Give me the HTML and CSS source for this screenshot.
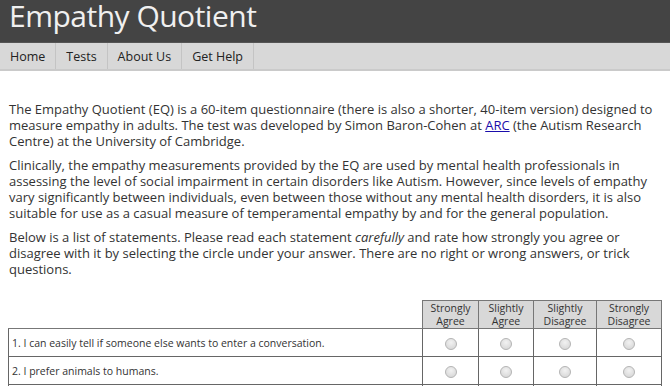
FILE: index.html
```html
<!DOCTYPE html>
<html>
<head>
<meta charset="utf-8">
<link rel="stylesheet" href="styles.css">
</head>
<body>
<header class="masthead"><h1 class="site-title">Empathy Quotient</h1></header>
<nav class="nav">
  <a class="nav-item" href="#">Home</a>
  <a class="nav-item" href="#">Tests</a>
  <a class="nav-item" href="#">About Us</a>
  <a class="nav-item" href="#">Get Help</a>
</nav>
<main class="content">
  <p>The Empathy Quotient (EQ) is a 60-item questionnaire (there is also a shorter, 40-item version) designed to measure empathy in adults. The test was developed by Simon Baron-Cohen at <a href="#" class="link">ARC</a> (the Autism Research Centre) at the University of Cambridge.</p>
  <p>Clinically, the empathy measurements provided by the EQ are used by mental health professionals in assessing the level of social impairment in certain disorders like Autism. However, since levels of empathy vary significantly between individuals, even between those without any mental health disorders, it is also suitable for use as a casual measure of temperamental empathy by and for the general population.</p>
  <p>Below is a list of statements. Please read each statement <em>carefully</em> and rate how strongly you agree or disagree with it by selecting the circle under your answer. There are no right or wrong answers, or trick questions.</p>
  <table class="quiz">
    <thead>
      <tr>
        <th class="blank"></th>
        <th class="c1">Strongly<br>Agree</th>
        <th class="c2">Slightly<br>Agree</th>
        <th class="c3">Slightly<br>Disagree</th>
        <th class="c4">Strongly<br>Disagree</th>
      </tr>
    </thead>
    <tbody>
      <tr>
        <td class="q">1. I can easily tell if someone else wants to enter a conversation.</td>
        <td class="opt"><span class="radio"></span></td>
        <td class="opt"><span class="radio"></span></td>
        <td class="opt"><span class="radio"></span></td>
        <td class="opt"><span class="radio"></span></td>
      </tr>
      <tr>
        <td class="q">2. I prefer animals to humans.</td>
        <td class="opt"><span class="radio"></span></td>
        <td class="opt"><span class="radio"></span></td>
        <td class="opt"><span class="radio"></span></td>
        <td class="opt"><span class="radio"></span></td>
      </tr>
      <tr>
        <td class="q">3. I try to keep up with the current trends and fashions.</td>
        <td class="opt"><span class="radio"></span></td>
        <td class="opt"><span class="radio"></span></td>
        <td class="opt"><span class="radio"></span></td>
        <td class="opt"><span class="radio"></span></td>
      </tr>
    </tbody>
  </table>
</main>
</body>
</html>
```
FILE: styles.css
```css
html, body {
  margin: 0;
  padding: 0;
  background: #fff;
  font-family: "Open Sans", "DejaVu Sans", sans-serif;
  color: #333;
}
.masthead {
  background: #444;
  height: 42px;
  padding: 0 9px;
  box-sizing: border-box;
}
.site-title {
  margin: 0;
  font-weight: 400;
  font-size: 30px;
  letter-spacing: -0.5px;
  line-height: 32px;
  color: #f0f0f0;
}
.nav {
  display: flex;
  height: 26px;
  background: #d8d8d8;
  border-top: 1px solid #555;
  border-bottom: 2px solid #cacaca;
}
.nav-item {
  display: flex;
  align-items: center;
  padding: 0 10px;
  font-size: 12.5px;
  color: #222;
  text-decoration: none;
  border-right: 1px solid #c4c4c4;
}
.content {
  padding: 30px 8px 0 9px;
}
.content p {
  margin: 0 0 8px;
  font-size: 13px;
  line-height: 16px;
}
.link {
  color: #1a0dab;
}
.quiz {
  margin-top: 23px;
  margin-left: -1px;
  border-collapse: collapse;
  width: 654px;
  font-size: 10.5px;
  color: #333;
}
.quiz th {
  background: #d8d8d8;
  border: 1px solid #777;
  font-weight: 400;
  line-height: 13px;
  padding: 0 2px;
  height: 27px;
}
.quiz th.blank {
  background: transparent;
  border: none;
  border-bottom: 1px solid #777;
}
.quiz td {
  border: 1px solid #666;
  height: 27px;
  padding: 0 3px;
}
.quiz .c1 { width: 51px; }
.quiz .c2 { width: 50px; }
.quiz .c3 { width: 58px; }
.quiz .c4 { width: 60px; }
.quiz td.opt {
  text-align: center;
}
.radio {
  display: inline-block;
  width: 10px;
  height: 10px;
  border-radius: 50%;
  border: 1px solid #b5b5b5;
  background: radial-gradient(circle at 50% 35%, #f2f2f2, #d2d2d2);
  vertical-align: middle;
}
```
